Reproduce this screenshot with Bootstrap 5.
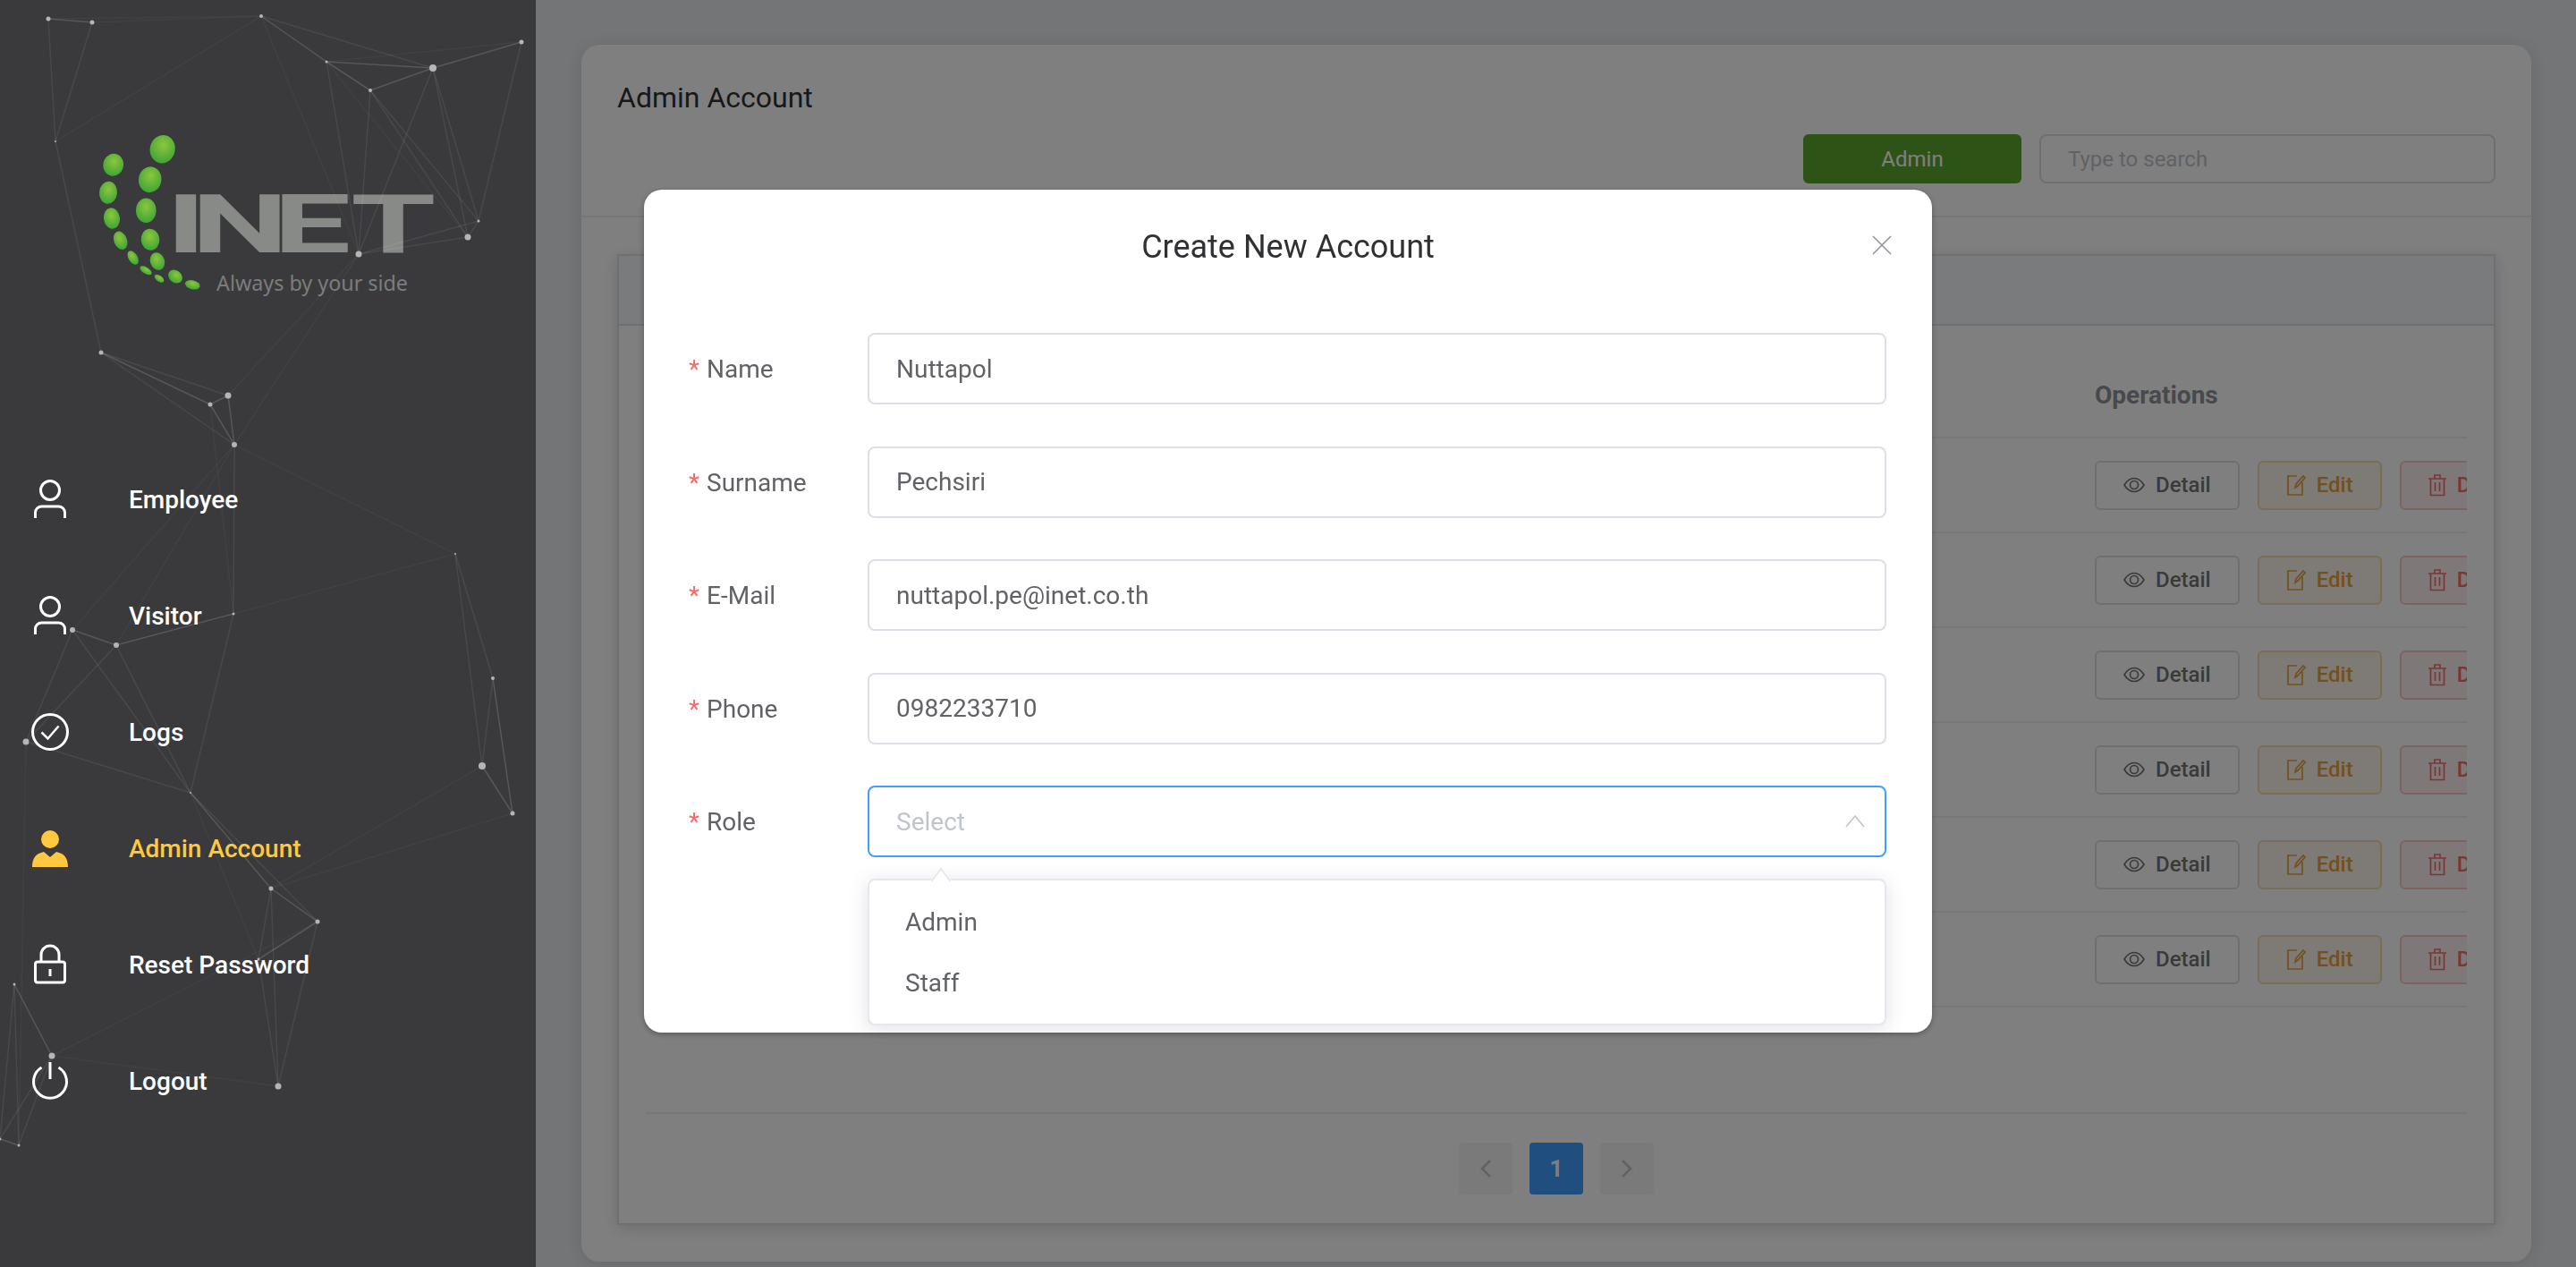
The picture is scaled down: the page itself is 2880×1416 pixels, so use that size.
<!DOCTYPE html>
<html lang="en">
<head>
    <meta charset="UTF-8">
    <title>Admin Account</title>
    <link href="https://cdn.jsdelivr.net/npm/bootstrap@5.3.2/dist/css/bootstrap.min.css" rel="stylesheet">
    <style>
        :root {
            --text-regular: #606266;
            --line: #dcdfe6;
            --placeholder: #c0c4cc;
            --focus: #409eff;
            --star: #f56c6c;
        }

        body {
            font-family: Roboto, "Liberation Sans", sans-serif;
            background: #e9ebef;
            height: 100vh;
            overflow: hidden;
        }

        /* sidebar */
        .side-panel {
            width: 599px;
            height: 100vh;
            background: #3a3a3c;
            position: relative;
            z-index: 1060;
        }
        .side-net { position: absolute; left: 0; top: 0; z-index: 1; }
        .side-net line { stroke: #fff; stroke-opacity: .075; stroke-width: 1.5; }
        .side-net line.hard { stroke-opacity: .15; }
        .side-net line.dim { stroke-opacity: .035; }
        .side-net circle { fill: #b5b5b6; }
        .logo-box { position: relative; height: 494px; }
        .logo-box svg { display: block; }
        .logo-word { font-family: Roboto, sans-serif; font-weight: 700; font-size: 91.4px; fill: #888a87; }
        .logo-tag { font-family: "Noto Sans", sans-serif; font-size: 23.5px; fill: #7c7c7c; }
        .side-menu { position: relative; z-index: 2; }
        .side-link {
            height: 130px;
            padding: 0 0 0 144px;
            color: #fff;
            font-size: 28px;
            font-weight: 500;
            position: relative;
        }
        .side-link:hover, .side-link:focus { color: #fff; }
        .side-link.current { color: #ffc93f; }
        .side-link svg { position: absolute; left: 32px; top: 41px; }

        /* main area */
        .main-area { padding: 50px 50px 6px 51px; min-width: 0; }
        .main-card { height: 1360px; border: 0; border-radius: 20px; box-shadow: 0 2px 20px rgba(0,0,0,.12); }
        .main-head {
            height: 193px;
            padding: 41px 40px 0;
            background: none;
            border-bottom: 2px solid #ebeef5;
        }
        .main-title { font-size: 32px; font-weight: 400; line-height: 36px; color: #303133; margin: 0 0 23px; }
        .role-btn {
            width: 244px;
            height: 55px;
            background: #5aa72e;
            border: 0;
            border-radius: 6px;
            color: #fff;
            font-size: 24px;
        }
        .search-box {
            width: 510px;
            height: 55px;
            border: 2px solid var(--line);
            border-radius: 8px;
            padding: 0 30px;
            font-size: 24px;
        }
        .search-box::placeholder { color: var(--placeholder); }

        .inner-card {
            height: 1085px;
            margin: 41px 40px 0;
            border: 2px solid #dcdfe6;
            border-radius: 0;
            box-shadow: 0 4px 16px rgba(0,0,0,.15);
        }
        .inner-head { height: 78px; background: #f5f7fa; border-bottom: 2px solid #dcdfe6; border-radius: 0 !important; }
        .inner-body { margin: 0 30px; overflow: hidden; }
        .ops-table { width: 2036px; table-layout: fixed; margin: 0; }
        .ops-table th, .ops-table td { padding: 0; border-bottom: 2px solid #ebeef5; vertical-align: middle; background: none; }
        .ops-table th { height: 125px; padding-top: 31px; color: #909399; font-size: 28px; font-weight: 700; }
        .ops-table td { height: 106px; }
        .ops-col { width: 416px; }
        .act-btn {
            height: 55px;
            padding: 0 30px;
            border: 2px solid var(--line);
            border-radius: 6px;
            background: #fff;
            color: #747478;
            font-size: 24px;
            font-weight: 500;
            gap: 12px;
        }
        .act-btn.warn { background: #fdf6ec; border-color: #f5dab1; color: #e6a23c; }
        .act-btn.bad { background: #fef0f0; border-color: #fbc4c4; color: #f56c6c; }

        .pager-bar { position: absolute; left: 30px; right: 30px; top: 957px; border-top: 2px solid #ebeef5; padding-top: 32px; }
        .pager-bar .pagination { gap: 20px; margin: 0; }
        .pager-bar .page-link {
            width: 60px;
            height: 58px;
            padding: 0;
            display: flex;
            align-items: center;
            justify-content: center;
            border: 0;
            border-radius: 4px !important;
            background: #f4f4f5;
            color: #c0c4cc;
            font-size: 26px;
            font-weight: 700;
        }
        .pager-bar .page-item.active .page-link { background: #409eff; color: #fff; }

        /* create dialog */
        .modal-dialog.create-dialog { max-width: none; width: 1440px; margin: 212px auto 0; }
        .create-box { height: 942px; border: 0; border-radius: 20px; box-shadow: 0 2px 6px rgba(0,0,0,.3); }
        .create-head { height: 126px; padding: 2px 0 0; border: 0; position: relative; justify-content: center; }
        .create-title { font-size: 36px; font-weight: 400; color: #303133; line-height: 1; }
        .create-close { position: absolute; right: 45px; top: 51px; padding: 0; border: 0; background: none; line-height: 0; }
        .create-body { padding: 34px 51px 0 50px; }
        .form-line { margin: 0 0 46.5px; height: 80px; }
        .form-cap { width: 200px; flex-shrink: 0; padding-top: 2px; color: var(--text-regular); font-size: 28px; }
        .form-cap i { color: var(--star); font-style: normal; margin-right: 8px; }
        .form-line .form-control {
            height: 80px;
            border: 2px solid var(--line);
            border-radius: 8px;
            padding: 0 30px;
            color: var(--text-regular);
            font-size: 28px;
        }
        .form-line .form-control::placeholder { color: var(--placeholder); }
        .form-line .form-control.is-open, .form-line .form-control:focus { border-color: var(--focus); box-shadow: none; }
        .pick-wrap { position: relative; flex: 1 1 auto; }
        .pick-arrow { position: absolute; right: 24px; top: 33px; }
        .pick-menu {
            display: block;
            position: absolute;
            left: 0;
            right: 0;
            top: 104px;
            margin: 0;
            padding: 12px 0;
            border: 2px solid #e4e7ed;
            border-radius: 8px;
            box-shadow: 0 4px 24px rgba(0,0,0,.12);
        }
        .pick-menu::before {
            content: "";
            position: absolute;
            left: 71px;
            top: -9px;
            width: 18px;
            height: 18px;
            background: #fff;
            border-left: 2px solid #e4e7ed;
            border-top: 2px solid #e4e7ed;
            transform: rotate(45deg) skew(8deg, 8deg);
        }
        .pick-menu .dropdown-item {
            height: 68px;
            line-height: 70px;
            padding: 0 40px;
            color: var(--text-regular);
            font-size: 28px;
        }
    </style>
</head>
<body>

<div class="d-flex">
    <!-- Sidebar -->
    <aside class="side-panel flex-shrink-0">
        <svg class="side-net" width="600" height="1416" viewBox="0 0 600 1416">
            <g id="netLines"></g>
            <g id="netDots"></g>
        </svg>
        <div class="logo-box">
            <svg width="599" height="494" viewBox="0 0 599 494">
                <defs>
                    <radialGradient id="leaf" cx="50%" cy="35%" r="65%">
                        <stop offset="0" stop-color="#8cc63f"/>
                        <stop offset="1" stop-color="#3fa535"/>
                    </radialGradient>
                </defs>
                <g fill="url(#leaf)">
                    <ellipse cx="181.7" cy="166.7" rx="14" ry="15.8" transform="rotate(12 181.7 166.7)"/>
                    <ellipse cx="126.7" cy="184.3" rx="11.3" ry="12.5" transform="rotate(12 126.7 184.3)"/>
                    <ellipse cx="167.7" cy="200.7" rx="12.7" ry="14.5" transform="rotate(10 167.7 200.7)"/>
                    <ellipse cx="121" cy="215.3" rx="10" ry="12.5" transform="rotate(6 121 215.3)"/>
                    <ellipse cx="163.3" cy="235.3" rx="11.3" ry="13.7"/>
                    <ellipse cx="125" cy="244" rx="9" ry="11.7" transform="rotate(-8 125 244)"/>
                    <ellipse cx="168" cy="267.7" rx="10.3" ry="12" transform="rotate(-6 168 267.7)"/>
                    <ellipse cx="134.7" cy="268.7" rx="7.3" ry="10.5" transform="rotate(-22 134.7 268.7)"/>
                    <ellipse cx="176" cy="292" rx="8" ry="10" transform="rotate(-20 176 292)"/>
                    <ellipse cx="148.7" cy="288" rx="5" ry="8.5" transform="rotate(-32 148.7 288)"/>
                    <ellipse cx="163" cy="302.3" rx="7.5" ry="3.6" transform="rotate(32 163 302.3)"/>
                    <ellipse cx="178" cy="311.3" rx="6" ry="3.4" transform="rotate(35 178 311.3)"/>
                    <ellipse cx="196" cy="309" rx="8.6" ry="6.8" transform="rotate(40 196 309)"/>
                    <ellipse cx="215.3" cy="318.3" rx="8.5" ry="5" transform="rotate(14 215.3 318.3)"/>
                </g>
                <text class="logo-word" transform="translate(197 282) scale(1.68 1)" x="-6.9 10.1 64.8 116.3" y="0">INET</text>
                <text class="logo-tag" x="242" y="325" textLength="214" lengthAdjust="spacingAndGlyphs">Always by your side</text>
            </svg>
        </div>

        <nav class="nav flex-column side-menu">
            <a class="nav-link side-link d-flex align-items-center" href="#">
                <svg width="48" height="48" viewBox="0 0 48 48" fill="none" stroke="#fff" stroke-width="3"><circle cx="24" cy="13" r="10.5"/><path d="M7.5 44v-6a7 7 0 0 1 7-7h19a7 7 0 0 1 7 7v6"/></svg>
                Employee
            </a>
            <a class="nav-link side-link d-flex align-items-center" href="#">
                <svg width="48" height="48" viewBox="0 0 48 48" fill="none" stroke="#fff" stroke-width="3"><circle cx="24" cy="13" r="10.5"/><path d="M7.5 44v-6a7 7 0 0 1 7-7h19a7 7 0 0 1 7 7v6"/></svg>
                Visitor
            </a>
            <a class="nav-link side-link d-flex align-items-center" href="#">
                <svg width="48" height="48" viewBox="0 0 48 48" fill="none" stroke="#fff" stroke-width="3"><circle cx="24" cy="23" r="19.5"/><path d="M14.5 23.5l7 7 12-14" stroke-width="2.5"/></svg>
                Logs
            </a>
            <a class="nav-link side-link current d-flex align-items-center" href="#">
                <svg width="48" height="48" viewBox="0 0 48 48" fill="#ffc93f"><circle cx="24" cy="13" r="10"/><path d="M4 44c0-10 4-15 13-17l7 6 7-6c9 2 13 7 13 17z"/></svg>
                Admin Account
            </a>
            <a class="nav-link side-link d-flex align-items-center" href="#">
                <svg width="48" height="48" viewBox="0 0 48 48" fill="none" stroke="#fff" stroke-width="3"><path d="M14 20v-8a10 10 0 0 1 20 0v8"/><rect x="7.5" y="20" width="33" height="23" rx="2.5"/><path d="M24 28v8"/></svg>
                Reset Password
            </a>
            <a class="nav-link side-link d-flex align-items-center" href="#">
                <svg width="48" height="48" viewBox="0 0 48 48" fill="none" stroke="#fff" stroke-width="3"><path d="M14.5 8a18.5 18.5 0 1 0 19 0"/><path d="M24 2v19"/></svg>
                Logout
            </a>
        </nav>
    </aside>

    <!-- Main content -->
    <main class="main-area flex-grow-1">
        <div class="card main-card">
            <div class="card-header main-head">
                <h5 class="main-title">Admin Account</h5>
                <div class="d-flex justify-content-end" style="gap:20px">
                    <button class="btn role-btn" type="button">Admin</button>
                    <input class="search-box" type="text" placeholder="Type to search">
                </div>
            </div>
            <div class="card inner-card">
                <div class="card-header inner-head"></div>
                <div class="inner-body">
                    <table class="table ops-table">
                        <thead>
                            <tr><th></th><th class="ops-col">Operations</th></tr>
                        </thead>
                        <tbody id="rows"></tbody>
                    </table>
                </div>
                <div class="pager-bar">
                    <ul class="pagination justify-content-center">
                        <li class="page-item disabled"><a class="page-link" href="#"><svg width="14" height="22" viewBox="0 0 14 22" fill="none" stroke="currentColor" stroke-width="2.6"><path d="M12 2l-9 9 9 9"/></svg></a></li>
                        <li class="page-item active"><a class="page-link" href="#">1</a></li>
                        <li class="page-item disabled"><a class="page-link" href="#"><svg width="14" height="22" viewBox="0 0 14 22" fill="none" stroke="currentColor" stroke-width="2.6"><path d="M2 2l9 9-9 9"/></svg></a></li>
                    </ul>
                </div>
            </div>
        </div>
    </main>
</div>

<div class="modal-backdrop show"></div>

<!-- Create account dialog -->
<div class="modal d-block">
    <div class="modal-dialog create-dialog">
        <div class="modal-content create-box">
            <div class="modal-header create-head">
                <h5 class="modal-title create-title">Create New Account</h5>
                <button class="create-close" type="button" aria-label="Close">
                    <svg width="22" height="22" viewBox="0 0 22 22" fill="none" stroke="#909399" stroke-width="1.6"><path d="M1 1l20 20M21 1L1 21"/></svg>
                </button>
            </div>
            <div class="modal-body create-body">
                <div class="form-line d-flex align-items-center">
                    <label class="form-cap"><i>*</i>Name</label>
                    <input class="form-control" type="text" value="Nuttapol">
                </div>
                <div class="form-line d-flex align-items-center">
                    <label class="form-cap"><i>*</i>Surname</label>
                    <input class="form-control" type="text" value="Pechsiri">
                </div>
                <div class="form-line d-flex align-items-center">
                    <label class="form-cap"><i>*</i>E-Mail</label>
                    <input class="form-control" type="text" value="nuttapol.pe@inet.co.th">
                </div>
                <div class="form-line d-flex align-items-center">
                    <label class="form-cap"><i>*</i>Phone</label>
                    <input class="form-control" type="text" value="0982233710">
                </div>
                <div class="form-line d-flex align-items-center">
                    <label class="form-cap"><i>*</i>Role</label>
                    <div class="pick-wrap">
                        <input class="form-control is-open" type="text" placeholder="Select" readonly>
                        <svg class="pick-arrow" width="22" height="14" viewBox="0 0 22 14" fill="none" stroke="#c0c4cc" stroke-width="1.6"><path d="M1 13L11 1l10 12"/></svg>
                        <ul class="dropdown-menu pick-menu list-unstyled">
                            <li><a class="dropdown-item" href="#">Admin</a></li>
                            <li><a class="dropdown-item" href="#">Staff</a></li>
                        </ul>
                    </div>
                </div>
            </div>
        </div>
    </div>
</div>

<script>
    // table rows, only the operations column shows beside the dialog
    var eye = '<svg width="24" height="18" viewBox="0 0 24 18" fill="none" stroke="currentColor" stroke-width="1.7"><path d="M1 9C4 4 8 1.500 12 1.500S20 4 23 9c-3 5-7 7.500-11 7.500S4 14 1 9z"/><circle cx="12" cy="9" r="4.500"/></svg>';
    var pen = '<svg width="22" height="26" viewBox="0 0 22 26" fill="none" stroke="currentColor" stroke-width="1.7"><path d="M12 3H2v21h16V10"/><path d="M10 16l1-4 8-9 2 2-8 9z"/></svg>';
    var bin = '<svg width="20" height="26" viewBox="0 0 20 26" fill="none" stroke="currentColor" stroke-width="1.7"><path d="M0 6h20M7 6V2h6v4M2.500 6v18.500h15V6M7.500 10v10M12.500 10v10"/></svg>';
    var html = '';
    for (var i = 0; i < 6; i++) {
        html += '<tr><td></td><td><div class="d-flex" style="gap:20px">' +
            '<button class="btn act-btn d-flex align-items-center flex-shrink-0">' + eye + 'Detail</button>' +
            '<button class="btn act-btn warn d-flex align-items-center flex-shrink-0">' + pen + 'Edit</button>' +
            '<button class="btn act-btn bad d-flex align-items-center flex-shrink-0">' + bin + 'Delete</button>' +
            '</div></td></tr>';
    }
    document.getElementById('rows').innerHTML = html;

    // network drawing in the sidebar
    var p = {
        a:[54,21,2.5], b:[103,25,2.5], c:[292,18,2], d:[365,69,1.5], e:[414,101,2], f:[484,76,4], g:[583,47,2.5],
        h:[62,158,1], i:[535,247,1.5], j:[523,265,3.5], k:[401,284,3.5], l:[113,394,2.5], m:[255,442,3.5], n:[235,452,2.5], o:[262,497,3],
        p:[509,619,1], q:[261,686,1.5], r:[81,704,3], s:[130,721,3], t:[551,758,2], u:[29,829,3.5], v:[213,886,1], w:[539,856,4], x:[573,909,2.5], y:[303,993,2.5],
        z:[355,1030,2.5], aa:[289,1072,1.5], ab:[16,1100,1.5], ac:[58,1180,3.5], ad:[311,1214,3.5], ae:[0,1273,1.5], af:[21,1280,1.5]
    };
    var hard = 'a-b c-d d-e e-f f-g d-f m-n m-o n-o l-n r-s q-s t-x w-x v-y y-z aa-z ab-ac ae-af';
    var mid = 'a-h b-h c-f g-i f-i f-j e-i e-j k-i k-j i-j d-k e-k f-k h-l l-m l-o r-u s-u s-v r-v q-v u-v q-o p-t p-w t-w v-z y-ad aa-ad z-ad y-aa ab-ae ab-af ac-ae ac-af';
    var faint = 'b-c a-c d-g h-c d-j m-k o-k c-k o-p q-p r-o s-o n-q w-y x-y ac-z ac-ad u-af v-aa';
    function addLines(list, cls) {
        var out = '';
        list.split(' ').forEach(function (e) {
            var n = e.split('-'), s = p[n[0]], t = p[n[1]];
            out += '<line class="' + cls + '" x1="' + s[0] + '" y1="' + s[1] + '" x2="' + t[0] + '" y2="' + t[1] + '"/>';
        });
        return out;
    }
    document.getElementById('netLines').innerHTML = addLines(hard, 'hard') + addLines(mid, '') + addLines(faint, 'dim');
    var dots = '';
    Object.keys(p).forEach(function (k) {
        dots += '<circle cx="' + p[k][0] + '" cy="' + p[k][1] + '" r="' + p[k][2] + '"/>';
    });
    document.getElementById('netDots').innerHTML = dots;
</script>
<script src="https://cdn.jsdelivr.net/npm/bootstrap@5.3.2/dist/js/bootstrap.bundle.min.js"></script>
</body>
</html>
